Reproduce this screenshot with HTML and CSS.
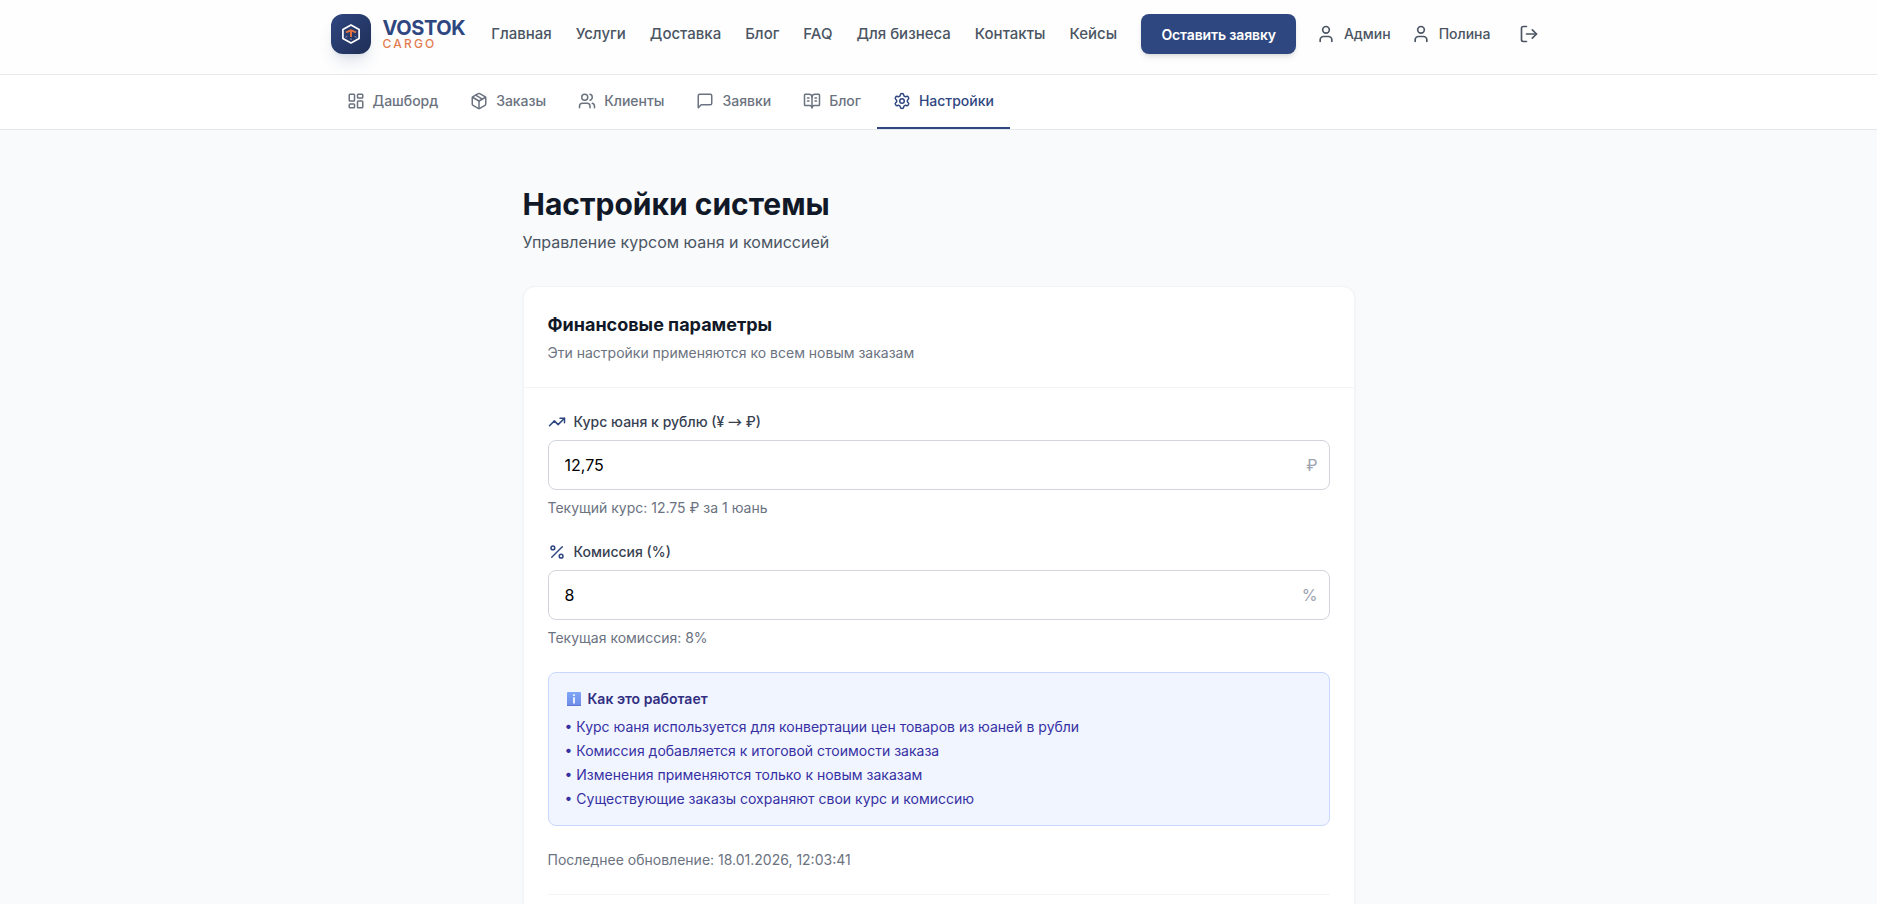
FILE: index.html
```html
<!DOCTYPE html>
<html lang="ru">

<head>
  <meta charset="UTF-8">
  <meta name="viewport" content="width=device-width, initial-scale=1.0">
  <title>Настройки системы</title>
  <link rel="stylesheet" href="styles.css">
</head>

<body>
  <header class="header">
    <div class="container header-inner">
      <a class="logo" href="#">
        <span class="logo-mark">
          <svg width="24" height="24" viewBox="0 0 24 24" fill="none">
            <path d="M12 3.1 20.1 7.6v8.8L12 20.9 3.9 16.4V7.6z" stroke="#fff" stroke-width="1.7" stroke-linejoin="round" />
            <path d="M6.5 15.3 8.3 14.3M17.5 15.3 15.7 14.3M12 18v-1.7" stroke="#93a0c0" stroke-width="1" />
            <path d="M12 15V8.6M7 10.4 12 8.4l5 2" stroke="#e0703f" stroke-width="2" />
          </svg>
        </span>
        <span class="logo-text">
          <span class="logo-name">VOSTOK</span>
          <span class="logo-sub">CARGO</span>
        </span>
      </a>

      <nav class="main-nav">
        <a href="#">Главная</a>
        <a href="#">Услуги</a>
        <a href="#">Доставка</a>
        <a href="#">Блог</a>
        <a href="#">FAQ</a>
        <a href="#">Для бизнеса</a>
        <a href="#">Контакты</a>
        <a href="#">Кейсы</a>
      </nav>

      <div class="header-actions">
        <button class="btn-primary">Оставить заявку</button>
        <a class="user-link" href="#">
          <svg class="icon icon-md" viewBox="0 0 24 24"><path d="M19 21v-2a4 4 0 0 0-4-4H9a4 4 0 0 0-4 4v2" /><circle cx="12" cy="7" r="4" /></svg>
          Админ
        </a>
        <a class="user-link" href="#">
          <svg class="icon icon-md" viewBox="0 0 24 24"><path d="M19 21v-2a4 4 0 0 0-4-4H9a4 4 0 0 0-4 4v2" /><circle cx="12" cy="7" r="4" /></svg>
          Полина
        </a>
        <button class="logout" aria-label="Выйти">
          <svg class="icon icon-md" viewBox="0 0 24 24"><path d="M9 21H5a2 2 0 0 1-2-2V5a2 2 0 0 1 2-2h4" /><path d="m16 17 5-5-5-5" /><path d="M21 12H9" /></svg>
        </button>
      </div>
    </div>
  </header>

  <nav class="admin-nav">
    <div class="container tabs">
      <a class="tab" href="#">
        <svg class="icon" viewBox="0 0 24 24"><rect width="7" height="9" x="3" y="3" rx="1" /><rect width="7" height="5" x="14" y="3" rx="1" /><rect width="7" height="9" x="14" y="12" rx="1" /><rect width="7" height="5" x="3" y="16" rx="1" /></svg>
        Дашборд
      </a>
      <a class="tab" href="#">
        <svg class="icon" viewBox="0 0 24 24"><path d="M11 21.73a2 2 0 0 0 2 0l7-4A2 2 0 0 0 21 16V8a2 2 0 0 0-1-1.73l-7-4a2 2 0 0 0-2 0l-7 4A2 2 0 0 0 3 8v8a2 2 0 0 0 1 1.73z" /><path d="M12 22V12" /><path d="m3.3 7 8.7 5 8.7-5" /><path d="m7.5 4.27 9 5.15" /></svg>
        Заказы
      </a>
      <a class="tab" href="#">
        <svg class="icon" viewBox="0 0 24 24"><path d="M16 21v-2a4 4 0 0 0-4-4H6a4 4 0 0 0-4 4v2" /><circle cx="9" cy="7" r="4" /><path d="M22 21v-2a4 4 0 0 0-3-3.87" /><path d="M16 3.13a4 4 0 0 1 0 7.75" /></svg>
        Клиенты
      </a>
      <a class="tab" href="#">
        <svg class="icon" viewBox="0 0 24 24"><path d="M21 15a2 2 0 0 1-2 2H7l-4 4V5a2 2 0 0 1 2-2h14a2 2 0 0 1 2 2z" /></svg>
        Заявки
      </a>
      <a class="tab" href="#">
        <svg class="icon" viewBox="0 0 24 24"><path d="M12 7v14" /><path d="M16 12h2" /><path d="M16 8h2" /><path d="M3 18a1 1 0 0 1-1-1V4a1 1 0 0 1 1-1h5a4 4 0 0 1 4 4 4 4 0 0 1 4-4h5a1 1 0 0 1 1 1v13a1 1 0 0 1-1 1h-6a3 3 0 0 0-3 3 3 3 0 0 0-3-3z" /><path d="M6 12h2" /><path d="M6 8h2" /></svg>
        Блог
      </a>
      <a class="tab tab-active" href="#">
        <svg class="icon" viewBox="0 0 24 24"><path d="M9.671 4.136a2.34 2.34 0 0 1 4.659 0 2.34 2.34 0 0 0 3.319 1.915 2.34 2.34 0 0 1 2.33 4.033 2.34 2.34 0 0 0 0 3.831 2.34 2.34 0 0 1-2.33 4.033 2.34 2.34 0 0 0-3.319 1.915 2.34 2.34 0 0 1-4.659 0 2.34 2.34 0 0 0-3.32-1.915 2.34 2.34 0 0 1-2.33-4.033 2.34 2.34 0 0 0 0-3.831A2.34 2.34 0 0 1 6.35 6.051a2.34 2.34 0 0 0 3.319-1.915" /><circle cx="12" cy="12" r="3" /></svg>
        Настройки
      </a>
    </div>
  </nav>

  <main class="page">
    <h1>Настройки системы</h1>
    <p class="page-desc">Управление курсом юаня и комиссией</p>

    <section class="card">
      <div class="card-header">
        <h2>Финансовые параметры</h2>
        <p>Эти настройки применяются ко всем новым заказам</p>
      </div>

      <form class="card-body">
        <div class="field">
          <label for="rate">
            <svg class="icon" viewBox="0 0 24 24"><path d="M16 7h6v6" /><path d="m22 7-8.5 8.5-5-5L2 17" /></svg>
            <span>Курс юаня к рублю (¥ <span class="arrow">→</span> ₽)</span>
          </label>
          <div class="input-wrap">
            <input id="rate" type="text" value="12,75">
            <span class="suffix">₽</span>
          </div>
          <p class="hint">Текущий курс: 12.75 ₽ за 1 юань</p>
        </div>

        <div class="field">
          <label for="fee">
            <svg class="icon" viewBox="0 0 24 24"><path d="M19 5 5 19" /><circle cx="6.5" cy="6.5" r="2.5" /><circle cx="17.5" cy="17.5" r="2.5" /></svg>
            Комиссия (%)
          </label>
          <div class="input-wrap">
            <input id="fee" type="text" value="8">
            <span class="suffix">%</span>
          </div>
          <p class="hint">Текущая комиссия: 8%</p>
        </div>

        <div class="info">
          <h3>
            <svg width="14" height="14" viewBox="0 0 14 14">
              <defs>
                <linearGradient id="infoFill" x1="0" y1="0" x2="0" y2="1">
                  <stop offset="0" stop-color="#7fa6f6" />
                  <stop offset="1" stop-color="#6f8ce8" />
                </linearGradient>
              </defs>
              <rect width="14" height="14" rx="1" fill="url(#infoFill)" />
              <path d="M0 13h14v1H0z" fill="#5c78d6" />
              <path d="M6 2.2h2v1.8H6zM6 5.2h2v6.3H6z" fill="#e8eefd" />
            </svg>
            Как это работает
          </h3>
          <ul>
            <li>• Курс юаня используется для конвертации цен товаров из юаней в рубли</li>
            <li>• Комиссия добавляется к итоговой стоимости заказа</li>
            <li>• Изменения применяются только к новым заказам</li>
            <li>• Существующие заказы сохраняют свои курс и комиссию</li>
          </ul>
        </div>

        <p class="updated">Последнее обновление: 18.01.2026, 12:03:41</p>
        <div class="form-footer"></div>
      </form>
    </section>
  </main>
</body>

</html>
```
FILE: styles.css
```css
*,
*::before,
*::after {
  box-sizing: border-box;
}

body {
  margin: 0;
  font-family: Inter, "Liberation Sans", sans-serif;
  font-size: 16px;
  line-height: 24px;
  color: #111827;
  background-color: #f9fafb;
}

h1,
h2,
h3,
p,
ul {
  margin: 0;
  padding: 0;
}

ul {
  list-style: none;
}

a {
  color: inherit;
  text-decoration: none;
}

button,
input {
  font-family: inherit;
}

.container {
  max-width: 1280px;
  margin: 0 auto;
  padding: 0 32px;
}

.icon {
  flex-shrink: 0;
  width: 18px;
  height: 18px;
  fill: none;
  stroke: currentColor;
  stroke-width: 2;
  stroke-linecap: round;
  stroke-linejoin: round;
}

.icon-md {
  width: 20px;
  height: 20px;
}

/* Header */

.header {
  background-color: #fefefe;
  border-bottom: 1px solid #e5e7eb;
}

.header-inner {
  display: flex;
  align-items: center;
  height: 74px;
  padding-bottom: 6px;
}

.logo {
  display: flex;
  align-items: center;
  gap: 12px;
  margin-right: 26px;
}

.logo-mark {
  display: flex;
  justify-content: center;
  align-items: center;
  width: 40px;
  height: 40px;
  border-radius: 12px;
  background-image: linear-gradient(to bottom right, #2f4780, #1f2e56);
  box-shadow: 0 10px 15px -3px rgba(47, 71, 128, 0.15), 0 4px 6px -4px rgba(47, 71, 128, 0.15);
}

.logo-text {
  display: flex;
  flex-direction: column;
}

.logo-name {
  font-size: 20px;
  font-weight: 700;
  line-height: 20px;
  letter-spacing: -0.4px;
  color: #2f4780;
}

.logo-sub {
  font-size: 12px;
  font-weight: 500;
  line-height: 12px;
  letter-spacing: 2.2px;
  color: #e27d50;
}

.main-nav {
  display: flex;
  gap: 24px;
  font-size: 15px;
  font-weight: 500;
  color: #4b5563;
}

.header-actions {
  display: flex;
  align-items: center;
  margin-left: auto;
}

.btn-primary {
  height: 40px;
  padding: 0 20px;
  border: none;
  border-radius: 8px;
  font-size: 14px;
  font-weight: 600;
  letter-spacing: -0.01em;
  color: #fff;
  background-color: #2f4780;
  box-shadow: 0 4px 6px -1px rgba(0, 0, 0, 0.1), 0 2px 4px -2px rgba(0, 0, 0, 0.1);
}

.user-link {
  display: flex;
  align-items: center;
  gap: 8px;
  margin-left: 20px;
  font-size: 14px;
  font-weight: 500;
  color: #4b5563;
}

.logout {
  display: flex;
  margin-left: 20px;
  padding: 8px;
  border: none;
  background: none;
  color: #4b5563;
}

/* Admin navigation */

.admin-nav {
  background-color: #fff;
  border-bottom: 1px solid #e5e7eb;
}

.tabs {
  display: flex;
}

.tab {
  display: flex;
  align-items: center;
  gap: 8px;
  padding: 16px;
  border-bottom: 2px solid transparent;
  font-size: 14px;
  font-weight: 500;
  line-height: 20px;
  letter-spacing: -0.02px;
  color: #6b7280;
}

.tab-active {
  color: #2f4780;
  border-color: #2f4780;
}

/* Page */

.page {
  max-width: 896px;
  margin: 0 auto;
  padding: 56px 32px 48px;
}

h1 {
  margin-bottom: 8px;
  font-size: 30px;
  font-weight: 700;
  line-height: 36px;
}

.page-desc {
  margin-bottom: 32px;
  color: #4b5563;
}

.card {
  border: 1px solid #f3f4f6;
  border-radius: 12px;
  background-color: #fff;
  box-shadow: 0 1px 3px rgba(0, 0, 0, 0.05);
}

.card-header {
  padding: 24px;
  border-bottom: 1px solid #f3f4f6;
}

.card-header h2 {
  margin-bottom: 4px;
  font-size: 18px;
  font-weight: 700;
  line-height: 28px;
}

.card-header p,
.hint,
.updated {
  font-size: 14px;
  line-height: 20px;
  color: #6b7280;
}

.card-body {
  display: flex;
  flex-direction: column;
  gap: 24px;
  padding: 24px;
}

.field {
  display: flex;
  flex-direction: column;
  gap: 8px;
}

.field label {
  display: flex;
  align-items: center;
  gap: 8px;
  font-size: 14px;
  font-weight: 500;
  line-height: 20px;
  color: #374151;
}

.field label .icon {
  color: #2f4780;
}

.arrow {
  font-family: "Noto Sans CJK SC", sans-serif;
  line-height: 1;
}

.input-wrap {
  display: flex;
  align-items: center;
  height: 50px;
  padding: 0 11px 0 16px;
  border: 1px solid #d1d5db;
  border-radius: 8px;
}

.input-wrap input {
  flex: 1;
  padding: 0;
  border: none;
  outline: none;
  font-size: 16px;
  line-height: 24px;
  color: #000;
  background: none;
}

.suffix {
  color: #9ca3af;
}

.info {
  padding: 16px;
  border: 1px solid #c7d7fe;
  border-radius: 8px;
  background-color: #f0f5ff;
  font-size: 14px;
  line-height: 20px;
}

.info h3 {
  display: flex;
  align-items: center;
  gap: 7px;
  margin-bottom: 8px;
  padding-left: 2px;
  font-size: 14px;
  font-weight: 600;
  color: #312e81;
}

.info ul {
  display: flex;
  flex-direction: column;
  gap: 4px;
  color: #3730a3;
}

.form-footer {
  height: 72px;
  border-top: 1px solid #f3f4f6;
}
```
